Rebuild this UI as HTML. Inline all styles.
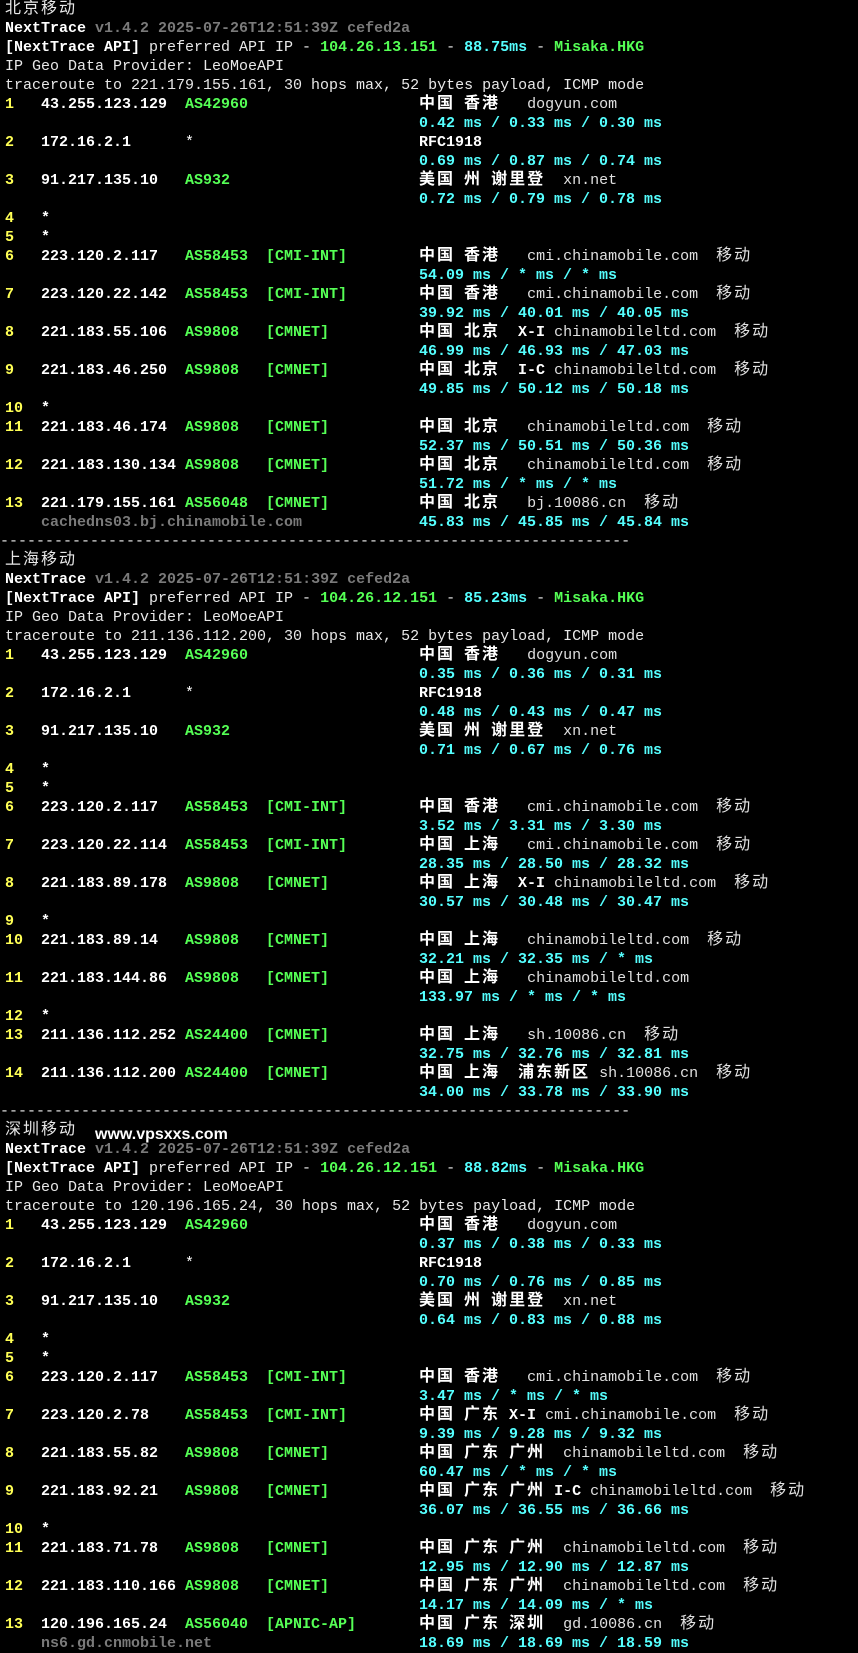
<!DOCTYPE html>
<html><head><meta charset="utf-8"><style>
html,body{margin:0;padding:0;background:#000;}
body{width:858px;height:1651px;overflow:hidden;position:relative;font-family:"Liberation Mono","Noto Sans CJK SC",monospace;font-size:15px;color:#e8e8e8;}
.l{height:19px;line-height:19px;white-space:pre;padding-left:5px;position:relative;overflow:visible}
.l span{white-space:pre;}
i{font-style:normal;font-family:"Noto Sans CJK SC","WenQuanYi Zen Hei",sans-serif;font-size:16px;letter-spacing:2px;line-height:19px;display:inline-block;height:19px;vertical-align:top;overflow:visible;position:relative;top:-3px}
.h{display:inline-block;width:36px;color:#ffff55;font-weight:bold}
.ip{display:inline-block;width:144px;color:#fff;font-weight:bold}
.as{display:inline-block;width:81px;color:#55ff55;font-weight:bold}
.isp{display:inline-block;width:153px;color:#55ff55;font-weight:bold}
.star{color:#fff;font-weight:normal}
.g{font-weight:bold;color:#fff}
.d{color:#e0e0e0;font-weight:normal}
.t{padding-left:419px;color:#55ffff;font-weight:bold}
.b{font-weight:bold;color:#fff}
.gr{color:#7a7a7a;font-weight:bold}
.gn{color:#55ff55;font-weight:bold}
.cy{color:#55ffff;font-weight:bold}
.hn{display:inline-block;width:36px}
.wm{position:absolute;left:95px;top:1126px;font-family:"Liberation Sans",sans-serif;font-weight:bold;font-size:16px;color:#fff;}
</style></head><body>
<div class="l"><i>北京移动</i></div>
<div class="l"><span class="b">NextTrace</span> <span class="gr">v1.4.2 2025-07-26T12:51:39Z cefed2a</span></div>
<div class="l"><span class="b">[NextTrace API]</span> preferred API IP - <span class="gn">104.26.13.151</span> - <span class="cy">88.75ms</span> - <span class="gn">Misaka.HKG</span></div>
<div class="l">IP Geo Data Provider: LeoMoeAPI</div>
<div class="l">traceroute to 221.179.155.161, 30 hops max, 52 bytes payload, ICMP mode</div>
<div class="l"><span class="h">1</span><span class="ip">43.255.123.129</span><span class="as">AS42960</span><span class="isp"></span><span class="g"><i>中国</i> <i>香港</i>   </span><span class="d">dogyun.com</span></div>
<div class="l t">0.42 ms / 0.33 ms / 0.30 ms</div>
<div class="l"><span class="h">2</span><span class="ip">172.16.2.1</span><span class="as star">*</span><span class="isp"></span><span class="g">RFC1918</span></div>
<div class="l t">0.69 ms / 0.87 ms / 0.74 ms</div>
<div class="l"><span class="h">3</span><span class="ip">91.217.135.10</span><span class="as">AS932</span><span class="isp"></span><span class="g"><i>美国</i> <i>州</i> <i>谢里登</i>  </span><span class="d">xn.net</span></div>
<div class="l t">0.72 ms / 0.79 ms / 0.78 ms</div>
<div class="l"><span class="h">4</span><span class="b">*</span></div>
<div class="l"><span class="h">5</span><span class="b">*</span></div>
<div class="l"><span class="h">6</span><span class="ip">223.120.2.117</span><span class="as">AS58453</span><span class="isp">[CMI-INT]</span><span class="g"><i>中国</i> <i>香港</i>   </span><span class="d">cmi.chinamobile.com  <i>移动</i></span></div>
<div class="l t">54.09 ms / * ms / * ms</div>
<div class="l"><span class="h">7</span><span class="ip">223.120.22.142</span><span class="as">AS58453</span><span class="isp">[CMI-INT]</span><span class="g"><i>中国</i> <i>香港</i>   </span><span class="d">cmi.chinamobile.com  <i>移动</i></span></div>
<div class="l t">39.92 ms / 40.01 ms / 40.05 ms</div>
<div class="l"><span class="h">8</span><span class="ip">221.183.55.106</span><span class="as">AS9808</span><span class="isp">[CMNET]</span><span class="g"><i>中国</i> <i>北京</i>  X-I </span><span class="d">chinamobileltd.com  <i>移动</i></span></div>
<div class="l t">46.99 ms / 46.93 ms / 47.03 ms</div>
<div class="l"><span class="h">9</span><span class="ip">221.183.46.250</span><span class="as">AS9808</span><span class="isp">[CMNET]</span><span class="g"><i>中国</i> <i>北京</i>  I-C </span><span class="d">chinamobileltd.com  <i>移动</i></span></div>
<div class="l t">49.85 ms / 50.12 ms / 50.18 ms</div>
<div class="l"><span class="h">10</span><span class="b">*</span></div>
<div class="l"><span class="h">11</span><span class="ip">221.183.46.174</span><span class="as">AS9808</span><span class="isp">[CMNET]</span><span class="g"><i>中国</i> <i>北京</i>   </span><span class="d">chinamobileltd.com  <i>移动</i></span></div>
<div class="l t">52.37 ms / 50.51 ms / 50.36 ms</div>
<div class="l"><span class="h">12</span><span class="ip">221.183.130.134</span><span class="as">AS9808</span><span class="isp">[CMNET]</span><span class="g"><i>中国</i> <i>北京</i>   </span><span class="d">chinamobileltd.com  <i>移动</i></span></div>
<div class="l t">51.72 ms / * ms / * ms</div>
<div class="l"><span class="h">13</span><span class="ip">221.179.155.161</span><span class="as">AS56048</span><span class="isp">[CMNET]</span><span class="g"><i>中国</i> <i>北京</i>   </span><span class="d">bj.10086.cn  <i>移动</i></span></div>
<div class="l"><span class="hn"></span><span class="gr" style="display:inline-block;width:378px">cachedns03.bj.chinamobile.com</span><span class="cy">45.83 ms / 45.85 ms / 45.84 ms</span></div>
<div class="l" style="padding-left:0">----------------------------------------------------------------------</div>
<div class="l"><i>上海移动</i></div>
<div class="l"><span class="b">NextTrace</span> <span class="gr">v1.4.2 2025-07-26T12:51:39Z cefed2a</span></div>
<div class="l"><span class="b">[NextTrace API]</span> preferred API IP - <span class="gn">104.26.12.151</span> - <span class="cy">85.23ms</span> - <span class="gn">Misaka.HKG</span></div>
<div class="l">IP Geo Data Provider: LeoMoeAPI</div>
<div class="l">traceroute to 211.136.112.200, 30 hops max, 52 bytes payload, ICMP mode</div>
<div class="l"><span class="h">1</span><span class="ip">43.255.123.129</span><span class="as">AS42960</span><span class="isp"></span><span class="g"><i>中国</i> <i>香港</i>   </span><span class="d">dogyun.com</span></div>
<div class="l t">0.35 ms / 0.36 ms / 0.31 ms</div>
<div class="l"><span class="h">2</span><span class="ip">172.16.2.1</span><span class="as star">*</span><span class="isp"></span><span class="g">RFC1918</span></div>
<div class="l t">0.48 ms / 0.43 ms / 0.47 ms</div>
<div class="l"><span class="h">3</span><span class="ip">91.217.135.10</span><span class="as">AS932</span><span class="isp"></span><span class="g"><i>美国</i> <i>州</i> <i>谢里登</i>  </span><span class="d">xn.net</span></div>
<div class="l t">0.71 ms / 0.67 ms / 0.76 ms</div>
<div class="l"><span class="h">4</span><span class="b">*</span></div>
<div class="l"><span class="h">5</span><span class="b">*</span></div>
<div class="l"><span class="h">6</span><span class="ip">223.120.2.117</span><span class="as">AS58453</span><span class="isp">[CMI-INT]</span><span class="g"><i>中国</i> <i>香港</i>   </span><span class="d">cmi.chinamobile.com  <i>移动</i></span></div>
<div class="l t">3.52 ms / 3.31 ms / 3.30 ms</div>
<div class="l"><span class="h">7</span><span class="ip">223.120.22.114</span><span class="as">AS58453</span><span class="isp">[CMI-INT]</span><span class="g"><i>中国</i> <i>上海</i>   </span><span class="d">cmi.chinamobile.com  <i>移动</i></span></div>
<div class="l t">28.35 ms / 28.50 ms / 28.32 ms</div>
<div class="l"><span class="h">8</span><span class="ip">221.183.89.178</span><span class="as">AS9808</span><span class="isp">[CMNET]</span><span class="g"><i>中国</i> <i>上海</i>  X-I </span><span class="d">chinamobileltd.com  <i>移动</i></span></div>
<div class="l t">30.57 ms / 30.48 ms / 30.47 ms</div>
<div class="l"><span class="h">9</span><span class="b">*</span></div>
<div class="l"><span class="h">10</span><span class="ip">221.183.89.14</span><span class="as">AS9808</span><span class="isp">[CMNET]</span><span class="g"><i>中国</i> <i>上海</i>   </span><span class="d">chinamobileltd.com  <i>移动</i></span></div>
<div class="l t">32.21 ms / 32.35 ms / * ms</div>
<div class="l"><span class="h">11</span><span class="ip">221.183.144.86</span><span class="as">AS9808</span><span class="isp">[CMNET]</span><span class="g"><i>中国</i> <i>上海</i>   </span><span class="d">chinamobileltd.com</span></div>
<div class="l t">133.97 ms / * ms / * ms</div>
<div class="l"><span class="h">12</span><span class="b">*</span></div>
<div class="l"><span class="h">13</span><span class="ip">211.136.112.252</span><span class="as">AS24400</span><span class="isp">[CMNET]</span><span class="g"><i>中国</i> <i>上海</i>   </span><span class="d">sh.10086.cn  <i>移动</i></span></div>
<div class="l t">32.75 ms / 32.76 ms / 32.81 ms</div>
<div class="l"><span class="h">14</span><span class="ip">211.136.112.200</span><span class="as">AS24400</span><span class="isp">[CMNET]</span><span class="g"><i>中国</i> <i>上海</i>  <i>浦东新区</i> </span><span class="d">sh.10086.cn  <i>移动</i></span></div>
<div class="l t">34.00 ms / 33.78 ms / 33.90 ms</div>
<div class="l" style="padding-left:0">----------------------------------------------------------------------</div>
<div class="l"><i>深圳移动</i></div>
<div class="l"><span class="b">NextTrace</span> <span class="gr">v1.4.2 2025-07-26T12:51:39Z cefed2a</span></div>
<div class="l"><span class="b">[NextTrace API]</span> preferred API IP - <span class="gn">104.26.12.151</span> - <span class="cy">88.82ms</span> - <span class="gn">Misaka.HKG</span></div>
<div class="l">IP Geo Data Provider: LeoMoeAPI</div>
<div class="l">traceroute to 120.196.165.24, 30 hops max, 52 bytes payload, ICMP mode</div>
<div class="l"><span class="h">1</span><span class="ip">43.255.123.129</span><span class="as">AS42960</span><span class="isp"></span><span class="g"><i>中国</i> <i>香港</i>   </span><span class="d">dogyun.com</span></div>
<div class="l t">0.37 ms / 0.38 ms / 0.33 ms</div>
<div class="l"><span class="h">2</span><span class="ip">172.16.2.1</span><span class="as star">*</span><span class="isp"></span><span class="g">RFC1918</span></div>
<div class="l t">0.70 ms / 0.76 ms / 0.85 ms</div>
<div class="l"><span class="h">3</span><span class="ip">91.217.135.10</span><span class="as">AS932</span><span class="isp"></span><span class="g"><i>美国</i> <i>州</i> <i>谢里登</i>  </span><span class="d">xn.net</span></div>
<div class="l t">0.64 ms / 0.83 ms / 0.88 ms</div>
<div class="l"><span class="h">4</span><span class="b">*</span></div>
<div class="l"><span class="h">5</span><span class="b">*</span></div>
<div class="l"><span class="h">6</span><span class="ip">223.120.2.117</span><span class="as">AS58453</span><span class="isp">[CMI-INT]</span><span class="g"><i>中国</i> <i>香港</i>   </span><span class="d">cmi.chinamobile.com  <i>移动</i></span></div>
<div class="l t">3.47 ms / * ms / * ms</div>
<div class="l"><span class="h">7</span><span class="ip">223.120.2.78</span><span class="as">AS58453</span><span class="isp">[CMI-INT]</span><span class="g"><i>中国</i> <i>广东</i> X-I </span><span class="d">cmi.chinamobile.com  <i>移动</i></span></div>
<div class="l t">9.39 ms / 9.28 ms / 9.32 ms</div>
<div class="l"><span class="h">8</span><span class="ip">221.183.55.82</span><span class="as">AS9808</span><span class="isp">[CMNET]</span><span class="g"><i>中国</i> <i>广东</i> <i>广州</i>  </span><span class="d">chinamobileltd.com  <i>移动</i></span></div>
<div class="l t">60.47 ms / * ms / * ms</div>
<div class="l"><span class="h">9</span><span class="ip">221.183.92.21</span><span class="as">AS9808</span><span class="isp">[CMNET]</span><span class="g"><i>中国</i> <i>广东</i> <i>广州</i> I-C </span><span class="d">chinamobileltd.com  <i>移动</i></span></div>
<div class="l t">36.07 ms / 36.55 ms / 36.66 ms</div>
<div class="l"><span class="h">10</span><span class="b">*</span></div>
<div class="l"><span class="h">11</span><span class="ip">221.183.71.78</span><span class="as">AS9808</span><span class="isp">[CMNET]</span><span class="g"><i>中国</i> <i>广东</i> <i>广州</i>  </span><span class="d">chinamobileltd.com  <i>移动</i></span></div>
<div class="l t">12.95 ms / 12.90 ms / 12.87 ms</div>
<div class="l"><span class="h">12</span><span class="ip">221.183.110.166</span><span class="as">AS9808</span><span class="isp">[CMNET]</span><span class="g"><i>中国</i> <i>广东</i> <i>广州</i>  </span><span class="d">chinamobileltd.com  <i>移动</i></span></div>
<div class="l t">14.17 ms / 14.09 ms / * ms</div>
<div class="l"><span class="h">13</span><span class="ip">120.196.165.24</span><span class="as">AS56040</span><span class="isp">[APNIC-AP]</span><span class="g"><i>中国</i> <i>广东</i> <i>深圳</i>  </span><span class="d">gd.10086.cn  <i>移动</i></span></div>
<div class="l"><span class="hn"></span><span class="gr" style="display:inline-block;width:378px">ns6.gd.cnmobile.net</span><span class="cy">18.69 ms / 18.69 ms / 18.59 ms</span></div>
<div class="wm">www.vpsxxs.com</div>
</body></html>
